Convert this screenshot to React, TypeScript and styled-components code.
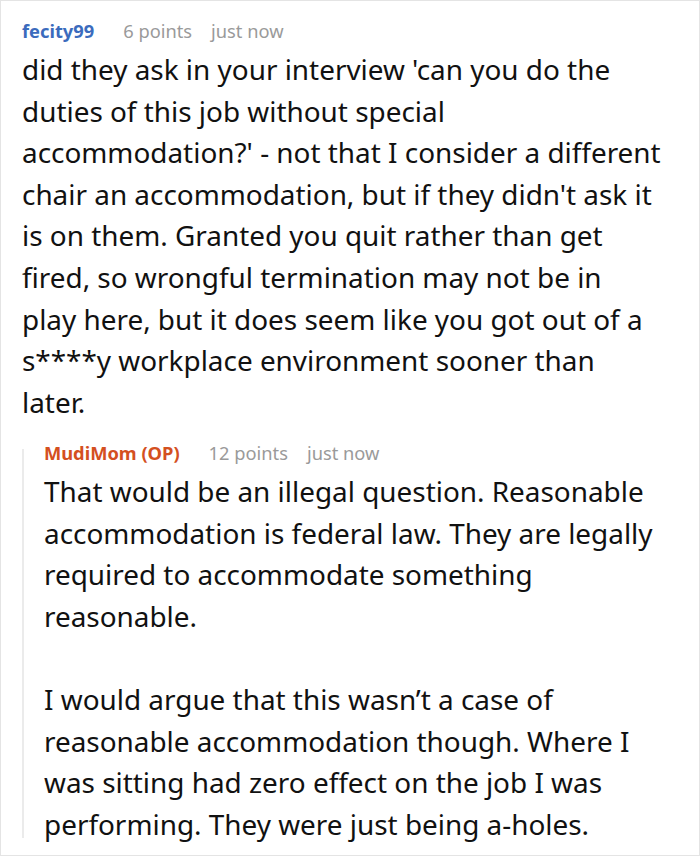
import React from 'react';
import styled, { createGlobalStyle } from 'styled-components';

const GlobalStyle = createGlobalStyle`
  html, body {
    margin: 0;
    padding: 0;
    background: #fff;
  }
  body {
    font-family: 'Noto Sans', 'Open Sans', sans-serif;
  }
`;

const Frame = styled.div`
  box-sizing: border-box;
  width: 700px;
  height: 856px;
  border: 1px solid #e4e4e4;
  padding: 16px 37.5px 0 21px;
  overflow: hidden;
`;

const Comment = styled.div`
  display: flex;
  flex-direction: column;
  min-width: 0;
  flex: 1;
`;

const Meta = styled.div`
  display: flex;
  align-items: baseline;
  font-size: 18.3px;
  line-height: 28px;
  color: #9a9a9a;
  white-space: nowrap;
`;

const Author = styled.span<{ $op?: boolean }>`
  font-weight: 700;
  color: ${p => (p.$op ? '#d4501f' : '#3b6bbd')};
`;

const Points = styled.span`
  margin-left: 29px;
`;

const Time = styled.span`
  margin-left: 19px;
`;

const Body = styled.div`
  font-size: 27.9px;
  line-height: 41.6px;
  color: #111;
  margin-top: 4px;

  p {
    margin: 0;
  }
  p + p {
    margin-top: 41.6px;
  }
`;

const Thread = styled.div`
  display: flex;
  margin-top: 15.6px;
`;

const Rail = styled.div`
  flex: 0 0 2px;
  background: #ebebeb;
  margin: 10px 20px 7px 0;
`;

export default function App() {
  return (
    <>
      <GlobalStyle />
      <Frame>
        <Comment>
          <Meta>
            <Author>fecity99</Author>
            <Points>6 points</Points>
            <Time>just now</Time>
          </Meta>
          <Body>
            <p>
              did they ask in your interview 'can you do the duties of this job without special
              accommodation?' - not that I consider a different chair an accommodation, but if they
              didn't ask it is on them. Granted you quit rather than get fired, so wrongful
              termination may not be in play here, but it does seem like you got out of a s****y
              workplace environment sooner than later.
            </p>
          </Body>
          <Thread>
            <Rail />
            <Comment>
              <Meta>
                <Author $op>MudiMom (OP)</Author>
                <Points>12 points</Points>
                <Time>just now</Time>
              </Meta>
              <Body>
                <p>
                  That would be an illegal question. Reasonable accommodation is federal law. They
                  are legally required to accommodate something reasonable.
                </p>
                <p>
                  I would argue that this wasn’t a case of reasonable accommodation though. Where I
                  was sitting had zero effect on the job I was performing. They were just being
                  a-holes.
                </p>
              </Body>
            </Comment>
          </Thread>
        </Comment>
      </Frame>
    </>
  );
}
